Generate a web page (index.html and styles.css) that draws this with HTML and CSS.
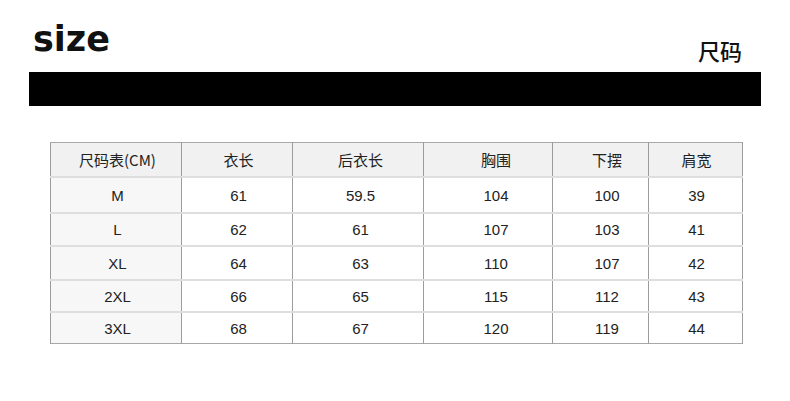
FILE: index.html
```html
<!DOCTYPE html>
<html lang="zh">
<head>
<meta charset="utf-8">
<title>尺码</title>
<link rel="stylesheet" href="styles.css">
</head>
<body>
<div class="page">
  <header class="title-row">
    <div class="size-word">size</div>
    <div class="size-cn">尺码</div>
  </header>
  <div class="black-bar"></div>
  <table class="size-table">
    <colgroup>
      <col class="c1"><col class="c2"><col class="c3"><col class="c4"><col class="c5"><col class="c6">
    </colgroup>
    <thead>
      <tr class="head-row"><th>尺码表(CM)</th><th>衣长</th><th>后衣长</th><th>胸围</th><th>下摆</th><th>肩宽</th></tr>
    </thead>
    <tbody>
      <tr class="r1"><td>M</td><td>61</td><td>59.5</td><td>104</td><td>100</td><td>39</td></tr>
      <tr class="r2"><td>L</td><td>62</td><td>61</td><td>107</td><td>103</td><td>41</td></tr>
      <tr class="r3"><td>XL</td><td>64</td><td>63</td><td>110</td><td>107</td><td>42</td></tr>
      <tr class="r4"><td>2XL</td><td>66</td><td>65</td><td>115</td><td>112</td><td>43</td></tr>
      <tr class="r5"><td>3XL</td><td>68</td><td>67</td><td>120</td><td>119</td><td>44</td></tr>
    </tbody>
  </table>
</div>
</body>
</html>
```
FILE: styles.css
```css
html, body {
  margin: 0;
  padding: 0;
  background: #ffffff;
}
.page {
  width: 790px;
  height: 401px;
  overflow: hidden;
}
.title-row {
  display: flex;
  justify-content: space-between;
  align-items: flex-start;
  height: 50px;
  padding: 22px 48px 0 33px;
}
.size-word {
  font-family: "DejaVu Sans", sans-serif;
  font-weight: bold;
  font-size: 35px;
  line-height: 35px;
  color: #111;
}
.size-cn {
  margin-top: 17px;
  font-family: "Noto Sans CJK SC", sans-serif;
  font-weight: 500;
  font-size: 22px;
  line-height: 22px;
  color: #111;
}
.black-bar {
  height: 34px;
  margin: 0 29px;
  background: #000;
}
.size-table {
  margin: 36px 0 0 50px;
  width: 692px;
  table-layout: fixed;
  border-collapse: collapse;
  border: 1px solid #a8a8a8;
  font-family: "Liberation Sans", "Noto Sans CJK SC", sans-serif;
  font-size: 15px;
  color: #222;
}
.c1 { width: 131px; }
.c2 { width: 111px; }
.c3 { width: 131px; }
.c4 { width: 129px; }
.c5 { width: 96px; }
.c6 { width: 94px; }
.size-table th,
.size-table td {
  padding: 0;
  text-align: center;
  vertical-align: middle;
  border-left: 1px solid #9c9c9c;
  border-right: 1px solid #9c9c9c;
  border-top: 2px solid #dedede;
  font-weight: normal;
}
.size-table th:nth-child(1),
.size-table td:nth-child(1) { padding-left: 3px; }
.size-table th:nth-child(2),
.size-table td:nth-child(2) { padding-left: 3px; }
.size-table th:nth-child(3),
.size-table td:nth-child(3) { padding-left: 5px; }
.size-table th:nth-child(4),
.size-table td:nth-child(4) { padding-left: 16px; }
.size-table th:nth-child(5),
.size-table td:nth-child(5) { padding-left: 13px; }
.size-table th:nth-child(6),
.size-table td:nth-child(6) { padding-left: 2px; }
.head-row th {
  height: 33px;
  background: #f1f1f1;
  border-top: 1px solid #a8a8a8;
  font-family: "Noto Sans CJK SC", sans-serif;
  font-size: 15px;
}
.size-table td:first-child {
  background: #f7f7f7;
}
.r1 td { height: 34px; }
.r2 td { height: 31px; }
.r3 td { height: 32px; }
.r4 td { height: 30px; }
.r5 td { height: 30px; }
```
